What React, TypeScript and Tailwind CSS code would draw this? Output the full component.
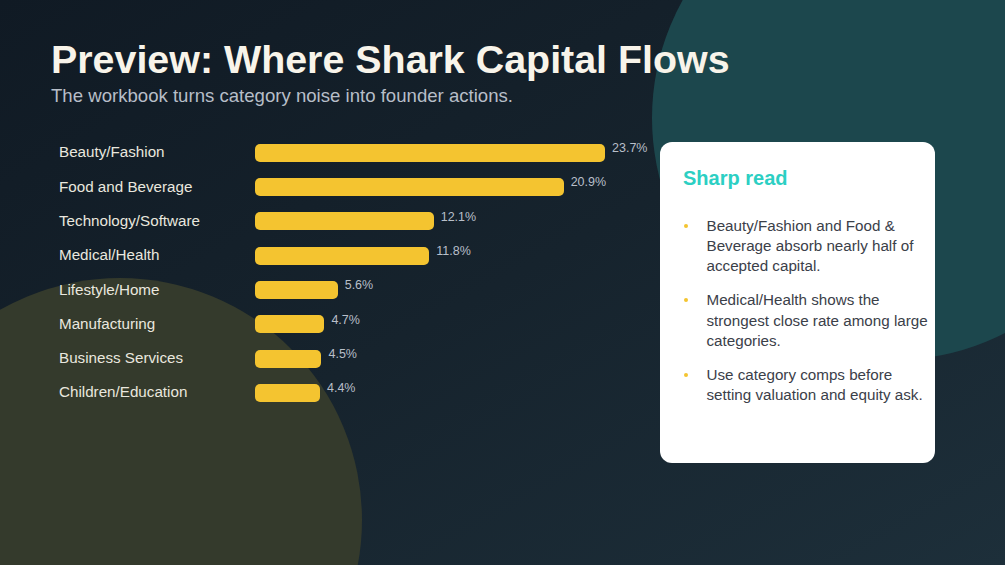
import React from 'react';

const rows = [
  { label: 'Beauty/Fashion', pct: 23.7 },
  { label: 'Food and Beverage', pct: 20.9 },
  { label: 'Technology/Software', pct: 12.1 },
  { label: 'Medical/Health', pct: 11.8 },
  { label: 'Lifestyle/Home', pct: 5.6 },
  { label: 'Manufacturing', pct: 4.7 },
  { label: 'Business Services', pct: 4.5 },
  { label: 'Children/Education', pct: 4.4 },
];

const notes = [
  'Beauty/Fashion and Food & Beverage absorb nearly half of accepted capital.',
  'Medical/Health shows the strongest close rate among large categories.',
  'Use category comps before setting valuation and equity ask.',
];

const PX_PER_PCT = 350 / 23.7;

const App: React.FC = () => {
  return (
    <div className="relative w-[1005px] h-[565px] overflow-hidden bg-gradient-to-br from-[#101a24] via-[#16232d] to-[#1d2f3a] font-['Liberation_Sans',Arial,sans-serif]">
      {/* decorative blobs */}
      <div className="absolute left-[652px] top-[-124px] w-[484px] h-[484px] rounded-full bg-[#1c474d]" />
      <div className="absolute left-[-122px] top-[278px] w-[484px] h-[484px] rounded-full bg-[#343a2c]" />

      <div className="relative pl-[51px] pt-[40px]">
        <h1 className="text-[39.4px] leading-[39px] font-bold text-[#f8f4ea]">
          Preview: Where Shark Capital Flows
        </h1>
        <p className="mt-[4.6px] text-[18.6px] leading-[24px] text-[#b7bec8]">
          The workbook turns category noise into founder actions.
        </p>

        <div className="mt-[28px] flex items-start">
          <div className="w-[608.5px] pl-2">
            {rows.map((row) => (
              <div key={row.label} className="flex items-center h-[34.3px]">
                <span className="w-[196px] text-[15.2px] text-[#e9e7df]">{row.label}</span>
                <div
                  className="h-[18px] rounded-[5px] bg-[#f4c430]"
                  style={{ width: `${row.pct * PX_PER_PCT}px` }}
                />
                <span className="self-start mt-[5.5px] ml-[7px] text-[12.5px] leading-[15px] text-[#b8bfc9]">
                  {row.pct}%
                </span>
              </div>
            ))}
          </div>

          <div className="mt-[6px] w-[275.5px] h-[321.5px] rounded-[12px] bg-white pl-[23.5px] pt-[22.5px]">
            <h2 className="text-[20px] leading-[28px] font-bold text-[#2ccfc3]">Sharp read</h2>
            <ul className="mt-[23.6px] flex flex-col gap-[14px]">
              {notes.map((note) => (
                <li key={note} className="flex items-start">
                  <span className="mt-[8px] ml-[1px] w-[4px] h-[4px] rounded-full bg-[#f4c430] shrink-0" />
                  <span className="ml-[18.5px] w-[226px] text-[15.2px] leading-[20.2px] text-[#3b4049]">
                    {note}
                  </span>
                </li>
              ))}
            </ul>
          </div>
        </div>
      </div>
    </div>
  );
};

export default App;
